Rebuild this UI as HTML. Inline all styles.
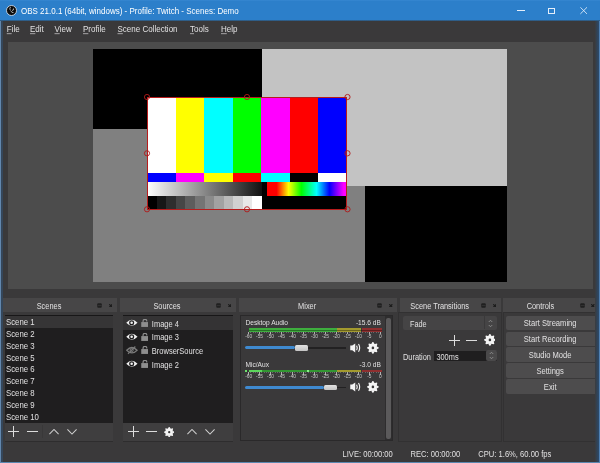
<!DOCTYPE html>
<html><head><meta charset="utf-8"><style>
html,body{margin:0;padding:0;background:#3a393a;width:600px;height:463px;overflow:hidden}
#r{position:relative;width:600px;height:463px;overflow:hidden;background:#3a393a;font-family:"Liberation Sans", sans-serif;will-change:transform}
.b{position:absolute}
.t{position:absolute;white-space:nowrap;line-height:1;font-family:"Liberation Sans", sans-serif}
u{text-decoration-thickness:0.6px;text-underline-offset:1.2px;text-decoration-color:rgba(225,224,225,0.55)}
</style></head><body><div id="r">
<div class="b" style="left:0.00px;top:0.00px;width:600.00px;height:21.30px;background:linear-gradient(to bottom,#3a8ad4 0px,#2c7fca 1px,#2c7fca 19.6px,#2f5a80 20.6px,#34404c 21.3px)"></div>
<svg class="b" style="left:6px;top:5px" width="11" height="11" viewBox="0 0 22 22">
<circle cx="11" cy="11" r="10" fill="#0b0b0b" stroke="#dfe9f3" stroke-width="1.6"/>
<path d="M9 4 Q6 8 9 11 M15 15 Q11 16 10 12 M15 7 Q16 11 12 11" stroke="#cfcfcf" stroke-width="1.6" fill="none"/>
</svg>
<div class="t" style="left:21.00px;top:7.83px;font-size:8px;color:#ffffff;transform:scaleY(1.15);transform-origin:0 6.77px;">OBS 21.0.1 (64bit, windows) - Profile: Twitch - Scenes: Demo</div>
<div class="b" style="left:516.80px;top:10.00px;width:8.20px;height:0.90px;background:#e4eefa"></div>
<div class="b" style="left:548.40px;top:7.60px;width:6.80px;height:6.70px;border:0.9px solid #e4eefa;box-sizing:border-box"></div>
<svg class="b" style="left:579.6px;top:7.4px" width="7.4" height="7.2" viewBox="0 0 8 8"><path d="M0.3 0.3 L7.7 7.7 M7.7 0.3 L0.3 7.7" stroke="#e4eefa" stroke-width="0.95"/></svg>
<div class="b" style="left:0.00px;top:21.00px;width:600.00px;height:17.00px;background:#3a393a"></div>
<div class="t" style="left:6.75px;top:25.93px;font-size:8px;color:#e1e0e1;transform:scaleY(1.15);transform-origin:0 6.77px;"><u>F</u>ile</div>
<div class="t" style="left:30.00px;top:25.93px;font-size:8px;color:#e1e0e1;transform:scaleY(1.15);transform-origin:0 6.77px;"><u>E</u>dit</div>
<div class="t" style="left:54.50px;top:25.93px;font-size:8px;color:#e1e0e1;transform:scaleY(1.15);transform-origin:0 6.77px;"><u>V</u>iew</div>
<div class="t" style="left:83.00px;top:25.93px;font-size:8px;color:#e1e0e1;transform:scaleY(1.15);transform-origin:0 6.77px;"><u>P</u>rofile</div>
<div class="t" style="left:117.50px;top:25.93px;font-size:8px;color:#e1e0e1;transform:scaleY(1.15);transform-origin:0 6.77px;"><u>S</u>cene Collection</div>
<div class="t" style="left:190.00px;top:25.93px;font-size:8px;color:#e1e0e1;transform:scaleY(1.15);transform-origin:0 6.77px;"><u>T</u>ools</div>
<div class="t" style="left:221.00px;top:25.93px;font-size:8px;color:#e1e0e1;transform:scaleY(1.15);transform-origin:0 6.77px;"><u>H</u>elp</div>
<div class="b" style="left:7.60px;top:41.80px;width:585.00px;height:247.50px;background:#4c4c4c"></div>
<div class="b" style="left:93.00px;top:49.00px;width:414.00px;height:233.00px;background:#808080"></div>
<div class="b" style="left:93.00px;top:49.00px;width:169.00px;height:80.00px;background:#000"></div>
<div class="b" style="left:262.00px;top:49.00px;width:245.00px;height:137.00px;background:#c3c3c3"></div>
<div class="b" style="left:365.00px;top:186.00px;width:142.00px;height:96.00px;background:#000"></div>
<div class="b" style="left:147.00px;top:97.00px;width:28.57px;height:75.50px;background:#ffffff"></div>
<div class="b" style="left:175.57px;top:97.00px;width:28.57px;height:75.50px;background:#ffff00"></div>
<div class="b" style="left:204.14px;top:97.00px;width:28.57px;height:75.50px;background:#00ffff"></div>
<div class="b" style="left:232.71px;top:97.00px;width:28.57px;height:75.50px;background:#00ff00"></div>
<div class="b" style="left:261.29px;top:97.00px;width:28.57px;height:75.50px;background:#ff00ff"></div>
<div class="b" style="left:289.86px;top:97.00px;width:28.57px;height:75.50px;background:#ff0000"></div>
<div class="b" style="left:318.43px;top:97.00px;width:28.57px;height:75.50px;background:#0000ff"></div>
<div class="b" style="left:147.00px;top:172.50px;width:28.57px;height:9.00px;background:#0000ff"></div>
<div class="b" style="left:175.57px;top:172.50px;width:28.57px;height:9.00px;background:#ff00ff"></div>
<div class="b" style="left:204.14px;top:172.50px;width:28.57px;height:9.00px;background:#ffff00"></div>
<div class="b" style="left:232.71px;top:172.50px;width:28.57px;height:9.00px;background:#ff0000"></div>
<div class="b" style="left:261.29px;top:172.50px;width:28.57px;height:9.00px;background:#00ffff"></div>
<div class="b" style="left:289.86px;top:172.50px;width:28.57px;height:9.00px;background:#000000"></div>
<div class="b" style="left:318.43px;top:172.50px;width:28.57px;height:9.00px;background:#ffffff"></div>
<div class="b" style="left:147.00px;top:181.50px;width:119.50px;height:14.00px;background:#000"></div>
<div class="b" style="left:147.00px;top:181.50px;width:115.00px;height:14.00px;background:linear-gradient(to right,#fff,#111)"></div>
<div class="b" style="left:266.50px;top:181.50px;width:80.50px;height:14.00px;background:linear-gradient(to right,#f00 0%,#f00 12%,#ff0 27%,#0f0 43%,#0ff 62%,#00f 78%,#f0f 96%)"></div>
<div class="b" style="left:147.00px;top:195.50px;width:200.00px;height:13.50px;background:#000"></div>
<div class="b" style="left:147.00px;top:195.50px;width:115.00px;height:13.50px;background:linear-gradient(to right,rgb(0,0,0) 0.000%, rgb(0,0,0) 8.333%,rgb(23,23,23) 8.333%, rgb(23,23,23) 16.667%,rgb(46,46,46) 16.667%, rgb(46,46,46) 25.000%,rgb(70,70,70) 25.000%, rgb(70,70,70) 33.333%,rgb(93,93,93) 33.333%, rgb(93,93,93) 41.667%,rgb(116,116,116) 41.667%, rgb(116,116,116) 50.000%,rgb(139,139,139) 50.000%, rgb(139,139,139) 58.333%,rgb(162,162,162) 58.333%, rgb(162,162,162) 66.667%,rgb(185,185,185) 66.667%, rgb(185,185,185) 75.000%,rgb(209,209,209) 75.000%, rgb(209,209,209) 83.333%,rgb(232,232,232) 83.333%, rgb(232,232,232) 91.667%,rgb(255,255,255) 91.667%, rgb(255,255,255) 100.000%)"></div>
<div class="b" style="left:146.50px;top:96.60px;width:200.90px;height:113.00px;border:1px solid #b81c1c;box-sizing:border-box"></div>
<svg class="b" style="left:140px;top:90px" width="215" height="125" viewBox="0 0 215 125"><circle cx="7" cy="7" r="2.6" fill="none" stroke="#b01818" stroke-width="0.9"/><circle cx="7" cy="63.30000000000001" r="2.6" fill="none" stroke="#b01818" stroke-width="0.9"/><circle cx="7" cy="119.30000000000001" r="2.6" fill="none" stroke="#b01818" stroke-width="0.9"/><circle cx="107" cy="7" r="2.6" fill="none" stroke="#b01818" stroke-width="0.9"/><circle cx="107" cy="119.30000000000001" r="2.6" fill="none" stroke="#b01818" stroke-width="0.9"/><circle cx="207.5" cy="7" r="2.6" fill="none" stroke="#b01818" stroke-width="0.9"/><circle cx="207.5" cy="63.30000000000001" r="2.6" fill="none" stroke="#b01818" stroke-width="0.9"/><circle cx="207.5" cy="119.30000000000001" r="2.6" fill="none" stroke="#b01818" stroke-width="0.9"/></svg>
<div class="b" style="left:3.00px;top:298.00px;width:114.00px;height:13.70px;background:#474647"></div>
<div class="t" style="left:-51.00px;width:200px;text-align:center;top:302.64px;font-size:7.4px;color:#e1e0e1;transform:scaleY(1.15);transform-origin:0 6.26px;">Scenes</div>
<svg class="b" style="left:97.00px;top:302.6px" width="5" height="5" viewBox="0 0 10 10">
<rect x="0.5" y="0.5" width="9" height="9" rx="2" fill="#202020"/><rect x="2" y="4.2" width="7" height="1.3" fill="#3a3a3a"/></svg>
<svg class="b" style="left:108.70px;top:303.6px" width="3.6" height="3.6" viewBox="0 0 4 4"><path d="M0.3 0.3L3.7 3.7M3.7 0.3L0.3 3.7" stroke="#1a1a1a" stroke-width="1.3"/></svg>
<div class="b" style="left:120.00px;top:298.00px;width:116.00px;height:13.70px;background:#474647"></div>
<div class="t" style="left:67.00px;width:200px;text-align:center;top:302.64px;font-size:7.4px;color:#e1e0e1;transform:scaleY(1.15);transform-origin:0 6.26px;">Sources</div>
<svg class="b" style="left:216.00px;top:302.6px" width="5" height="5" viewBox="0 0 10 10">
<rect x="0.5" y="0.5" width="9" height="9" rx="2" fill="#202020"/><rect x="2" y="4.2" width="7" height="1.3" fill="#3a3a3a"/></svg>
<svg class="b" style="left:227.70px;top:303.6px" width="3.6" height="3.6" viewBox="0 0 4 4"><path d="M0.3 0.3L3.7 3.7M3.7 0.3L0.3 3.7" stroke="#1a1a1a" stroke-width="1.3"/></svg>
<div class="b" style="left:239.00px;top:298.00px;width:158.30px;height:13.70px;background:#474647"></div>
<div class="t" style="left:207.15px;width:200px;text-align:center;top:302.64px;font-size:7.4px;color:#e1e0e1;transform:scaleY(1.15);transform-origin:0 6.26px;">Mixer</div>
<svg class="b" style="left:377.30px;top:302.6px" width="5" height="5" viewBox="0 0 10 10">
<rect x="0.5" y="0.5" width="9" height="9" rx="2" fill="#202020"/><rect x="2" y="4.2" width="7" height="1.3" fill="#3a3a3a"/></svg>
<svg class="b" style="left:389.00px;top:303.6px" width="3.6" height="3.6" viewBox="0 0 4 4"><path d="M0.3 0.3L3.7 3.7M3.7 0.3L0.3 3.7" stroke="#1a1a1a" stroke-width="1.3"/></svg>
<div class="b" style="left:399.70px;top:298.00px;width:101.30px;height:13.70px;background:#474647"></div>
<div class="t" style="left:339.70px;width:200px;text-align:center;top:302.64px;font-size:7.4px;color:#e1e0e1;transform:scaleY(1.15);transform-origin:0 6.26px;">Scene Transitions</div>
<svg class="b" style="left:481.00px;top:302.6px" width="5" height="5" viewBox="0 0 10 10">
<rect x="0.5" y="0.5" width="9" height="9" rx="2" fill="#202020"/><rect x="2" y="4.2" width="7" height="1.3" fill="#3a3a3a"/></svg>
<svg class="b" style="left:492.70px;top:303.6px" width="3.6" height="3.6" viewBox="0 0 4 4"><path d="M0.3 0.3L3.7 3.7M3.7 0.3L0.3 3.7" stroke="#1a1a1a" stroke-width="1.3"/></svg>
<div class="b" style="left:503.30px;top:298.00px;width:91.70px;height:13.70px;background:#474647"></div>
<div class="t" style="left:440.40px;width:200px;text-align:center;top:302.64px;font-size:7.4px;color:#e1e0e1;transform:scaleY(1.15);transform-origin:0 6.26px;">Controls</div>
<svg class="b" style="left:579.50px;top:302.6px" width="5" height="5" viewBox="0 0 10 10">
<rect x="0.5" y="0.5" width="9" height="9" rx="2" fill="#202020"/><rect x="2" y="4.2" width="7" height="1.3" fill="#3a3a3a"/></svg>
<svg class="b" style="left:591.20px;top:303.6px" width="3.6" height="3.6" viewBox="0 0 4 4"><path d="M0.3 0.3L3.7 3.7M3.7 0.3L0.3 3.7" stroke="#1a1a1a" stroke-width="1.3"/></svg>
<div class="b" style="left:595.00px;top:298.00px;width:3.00px;height:14.00px;background:#3a393a"></div>
<div class="b" style="left:4.50px;top:315.00px;width:108.80px;height:107.50px;background:#1f1e1f"></div>
<div class="b" style="left:4.50px;top:315.00px;width:108.80px;height:0.80px;background:#181718"></div>
<div class="b" style="left:4.50px;top:315.80px;width:108.80px;height:12.20px;background:#363536"></div>
<div class="t" style="left:6.00px;top:319.10px;font-size:7.8px;color:#e1e0e1;transform:scaleY(1.15);transform-origin:0 6.60px;">Scene 1</div>
<div class="t" style="left:6.00px;top:330.90px;font-size:7.8px;color:#e1e0e1;transform:scaleY(1.15);transform-origin:0 6.60px;">Scene 2</div>
<div class="t" style="left:6.00px;top:342.70px;font-size:7.8px;color:#e1e0e1;transform:scaleY(1.15);transform-origin:0 6.60px;">Scene 3</div>
<div class="t" style="left:6.00px;top:354.50px;font-size:7.8px;color:#e1e0e1;transform:scaleY(1.15);transform-origin:0 6.60px;">Scene 5</div>
<div class="t" style="left:6.00px;top:366.30px;font-size:7.8px;color:#e1e0e1;transform:scaleY(1.15);transform-origin:0 6.60px;">Scene 6</div>
<div class="t" style="left:6.00px;top:378.10px;font-size:7.8px;color:#e1e0e1;transform:scaleY(1.15);transform-origin:0 6.60px;">Scene 7</div>
<div class="t" style="left:6.00px;top:389.90px;font-size:7.8px;color:#e1e0e1;transform:scaleY(1.15);transform-origin:0 6.60px;">Scene 8</div>
<div class="t" style="left:6.00px;top:401.70px;font-size:7.8px;color:#e1e0e1;transform:scaleY(1.15);transform-origin:0 6.60px;">Scene 9</div>
<div class="t" style="left:6.00px;top:413.50px;font-size:7.8px;color:#e1e0e1;transform:scaleY(1.15);transform-origin:0 6.60px;">Scene 10</div>
<div class="b" style="left:4.50px;top:422.50px;width:108.80px;height:18.50px;background:#3f3e3f"></div>
<div class="b" style="left:4.50px;top:441.00px;width:108.80px;height:0.90px;background:#2e2d2e"></div>
<div class="b" style="left:8.10px;top:431.30px;width:11.00px;height:1px;background:#dcdcdc"></div>
<div class="b" style="left:13.10px;top:426.30px;width:1px;height:11.00px;background:#dcdcdc"></div>
<div class="b" style="left:26.50px;top:431.30px;width:11.00px;height:1px;background:#dcdcdc"></div>
<svg class="b" style="left:49.00px;top:429.10px" width="10" height="5.5" viewBox="0 -0.5 10 6"><path d="M0 5 L5 0 L10 5" stroke="#d0d0d0" stroke-width="1.1" fill="none"/></svg>
<svg class="b" style="left:67.00px;top:429.10px" width="10" height="5.5" viewBox="0 -0.5 10 6"><path d="M0 0 L5 5 L10 0" stroke="#d0d0d0" stroke-width="1.1" fill="none"/></svg>
<div class="b" style="left:42.00px;top:425.00px;width:0.70px;height:13.00px;background:#393839"></div>
<div class="b" style="left:122.50px;top:315.00px;width:110.00px;height:107.50px;background:#1f1e1f"></div>
<div class="b" style="left:122.50px;top:315.00px;width:110.00px;height:1.00px;background:#181718"></div>
<div class="b" style="left:122.50px;top:316.00px;width:110.00px;height:13.50px;background:#343334"></div>
<div class="t" style="left:151.80px;top:320.75px;font-size:7.5px;color:#e1e0e1;transform:scaleY(1.15);transform-origin:0 6.35px;">Image 4</div>
<svg class="b" style="left:126.4px;top:319.20px" width="11.8" height="7.6" viewBox="0 0 24 15.5">
<path d="M0.5 7.75 Q12 -4.5 23.5 7.75 Q12 20 0.5 7.75Z" fill="#f2f2f2"/><circle cx="11.5" cy="7.75" r="5.2" fill="#1f1e1f"/><circle cx="11.5" cy="7.75" r="2.6" fill="#f2f2f2"/></svg>
<svg class="b" style="left:140.6px;top:318.80px" width="7.8" height="8" viewBox="0 0 16 16.4">
<path d="M4.2 6.5 V4.6 A3.9 3.9 0 0 1 12 4.6 V5" stroke="#8e8e8e" stroke-width="2.4" fill="none"/><rect x="0.5" y="6.3" width="15" height="10" fill="#8e8e8e"/></svg>
<div class="t" style="left:151.80px;top:334.45px;font-size:7.5px;color:#e1e0e1;transform:scaleY(1.15);transform-origin:0 6.35px;">Image 3</div>
<svg class="b" style="left:126.4px;top:332.90px" width="11.8" height="7.6" viewBox="0 0 24 15.5">
<path d="M0.5 7.75 Q12 -4.5 23.5 7.75 Q12 20 0.5 7.75Z" fill="#f2f2f2"/><circle cx="11.5" cy="7.75" r="5.2" fill="#1f1e1f"/><circle cx="11.5" cy="7.75" r="2.6" fill="#f2f2f2"/></svg>
<svg class="b" style="left:140.6px;top:332.50px" width="7.8" height="8" viewBox="0 0 16 16.4">
<path d="M4.2 6.5 V4.6 A3.9 3.9 0 0 1 12 4.6 V5" stroke="#8e8e8e" stroke-width="2.4" fill="none"/><rect x="0.5" y="6.3" width="15" height="10" fill="#8e8e8e"/></svg>
<div class="t" style="left:151.80px;top:348.15px;font-size:7.5px;color:#e1e0e1;transform:scaleY(1.15);transform-origin:0 6.35px;">BrowserSource</div>
<svg class="b" style="left:126.4px;top:346.20px" width="11.8" height="8.4" viewBox="0 0 24 17">
<path d="M1.5 8.5 Q12 -2.5 22.5 8.5 Q12 19.5 1.5 8.5Z" fill="none" stroke="#7a7a7a" stroke-width="2.6"/><circle cx="11.5" cy="8.5" r="3.2" fill="none" stroke="#7a7a7a" stroke-width="2"/>
<path d="M4 16 L19 1" stroke="#7a7a7a" stroke-width="2.4"/></svg>
<svg class="b" style="left:140.6px;top:346.20px" width="7.8" height="8" viewBox="0 0 16 16.4">
<path d="M4.2 6.5 V4.6 A3.9 3.9 0 0 1 12 4.6 V5" stroke="#8e8e8e" stroke-width="2.4" fill="none"/><rect x="0.5" y="6.3" width="15" height="10" fill="#8e8e8e"/></svg>
<div class="t" style="left:151.80px;top:361.85px;font-size:7.5px;color:#e1e0e1;transform:scaleY(1.15);transform-origin:0 6.35px;">Image 2</div>
<svg class="b" style="left:126.4px;top:360.30px" width="11.8" height="7.6" viewBox="0 0 24 15.5">
<path d="M0.5 7.75 Q12 -4.5 23.5 7.75 Q12 20 0.5 7.75Z" fill="#f2f2f2"/><circle cx="11.5" cy="7.75" r="5.2" fill="#1f1e1f"/><circle cx="11.5" cy="7.75" r="2.6" fill="#f2f2f2"/></svg>
<svg class="b" style="left:140.6px;top:359.90px" width="7.8" height="8" viewBox="0 0 16 16.4">
<path d="M4.2 6.5 V4.6 A3.9 3.9 0 0 1 12 4.6 V5" stroke="#8e8e8e" stroke-width="2.4" fill="none"/><rect x="0.5" y="6.3" width="15" height="10" fill="#8e8e8e"/></svg>
<div class="b" style="left:122.50px;top:422.50px;width:110.00px;height:18.50px;background:#3f3e3f"></div>
<div class="b" style="left:122.50px;top:441.00px;width:110.00px;height:0.90px;background:#2e2d2e"></div>
<div class="b" style="left:127.50px;top:431.30px;width:11.00px;height:1px;background:#dcdcdc"></div>
<div class="b" style="left:132.50px;top:426.30px;width:1px;height:11.00px;background:#dcdcdc"></div>
<div class="b" style="left:145.50px;top:431.30px;width:11.00px;height:1px;background:#dcdcdc"></div>
<svg class="b" style="left:163.80px;top:426.60px" width="10.40" height="10.40" viewBox="-12 -12 24 24">
<g fill="#f4f4f4"><path d="M-3.6 -7.2 L-0.9 -11.9 L0.9 -11.9 L3.6 -7.2 Z" transform="rotate(0)"/><path d="M-3.6 -7.2 L-0.9 -11.9 L0.9 -11.9 L3.6 -7.2 Z" transform="rotate(45)"/><path d="M-3.6 -7.2 L-0.9 -11.9 L0.9 -11.9 L3.6 -7.2 Z" transform="rotate(90)"/><path d="M-3.6 -7.2 L-0.9 -11.9 L0.9 -11.9 L3.6 -7.2 Z" transform="rotate(135)"/><path d="M-3.6 -7.2 L-0.9 -11.9 L0.9 -11.9 L3.6 -7.2 Z" transform="rotate(180)"/><path d="M-3.6 -7.2 L-0.9 -11.9 L0.9 -11.9 L3.6 -7.2 Z" transform="rotate(225)"/><path d="M-3.6 -7.2 L-0.9 -11.9 L0.9 -11.9 L3.6 -7.2 Z" transform="rotate(270)"/><path d="M-3.6 -7.2 L-0.9 -11.9 L0.9 -11.9 L3.6 -7.2 Z" transform="rotate(315)"/><circle r="8.3"/></g><circle r="2.6" fill="#3a393a"/></svg>
<svg class="b" style="left:187.00px;top:429.10px" width="10" height="5.5" viewBox="0 -0.5 10 6"><path d="M0 5 L5 0 L10 5" stroke="#d0d0d0" stroke-width="1.1" fill="none"/></svg>
<svg class="b" style="left:204.50px;top:429.10px" width="10" height="5.5" viewBox="0 -0.5 10 6"><path d="M0 0 L5 5 L10 0" stroke="#d0d0d0" stroke-width="1.1" fill="none"/></svg>
<div class="b" style="left:240.00px;top:314.80px;width:153.00px;height:126.20px;background:#3a393a;border:1px solid #2a292a;box-sizing:border-box"></div>
<div class="b" style="left:385.00px;top:316.00px;width:7.00px;height:124.00px;background:#2e2d2e"></div>
<div class="b" style="left:386.20px;top:318.00px;width:5.00px;height:121.00px;background:#5b5a5b;border-radius:2px"></div>
<div class="t" style="left:245.50px;top:319.91px;font-size:6.6px;color:#e1e0e1;">Desktop Audio</div>
<div class="t" style="right:219.20px;top:319.91px;font-size:6.6px;color:#e1e0e1;">-15.6 dB</div>
<div class="b" style="left:248.80px;top:328.00px;width:88.00px;height:3.80px;background:#329632"></div>
<div class="b" style="left:336.80px;top:328.00px;width:24.70px;height:3.80px;background:#a39a2e"></div>
<div class="b" style="left:361.50px;top:328.00px;width:20.90px;height:3.80px;background:#8f2f2f"></div>
<div class="b" style="left:248.80px;top:328.00px;width:88.00px;height:3.80px;background:#3eae3e"></div>
<div class="b" style="left:248.80px;top:329.65px;width:133.60px;height:0.50px;background:rgba(0,0,0,0.35)"></div>
<div class="b" style="left:250.49px;top:331.80px;width:0.70px;height:1.40px;background:#6a6a6a"></div>
<div class="b" style="left:252.69px;top:331.80px;width:0.70px;height:1.40px;background:#6a6a6a"></div>
<div class="b" style="left:254.88px;top:331.80px;width:0.70px;height:1.40px;background:#6a6a6a"></div>
<div class="b" style="left:257.08px;top:331.80px;width:0.70px;height:1.40px;background:#6a6a6a"></div>
<div class="b" style="left:261.47px;top:331.80px;width:0.70px;height:1.40px;background:#6a6a6a"></div>
<div class="b" style="left:263.66px;top:331.80px;width:0.70px;height:1.40px;background:#6a6a6a"></div>
<div class="b" style="left:265.86px;top:331.80px;width:0.70px;height:1.40px;background:#6a6a6a"></div>
<div class="b" style="left:268.06px;top:331.80px;width:0.70px;height:1.40px;background:#6a6a6a"></div>
<div class="b" style="left:272.44px;top:331.80px;width:0.70px;height:1.40px;background:#6a6a6a"></div>
<div class="b" style="left:274.64px;top:331.80px;width:0.70px;height:1.40px;background:#6a6a6a"></div>
<div class="b" style="left:276.83px;top:331.80px;width:0.70px;height:1.40px;background:#6a6a6a"></div>
<div class="b" style="left:279.03px;top:331.80px;width:0.70px;height:1.40px;background:#6a6a6a"></div>
<div class="b" style="left:283.42px;top:331.80px;width:0.70px;height:1.40px;background:#6a6a6a"></div>
<div class="b" style="left:285.62px;top:331.80px;width:0.70px;height:1.40px;background:#6a6a6a"></div>
<div class="b" style="left:287.81px;top:331.80px;width:0.70px;height:1.40px;background:#6a6a6a"></div>
<div class="b" style="left:290.00px;top:331.80px;width:0.70px;height:1.40px;background:#6a6a6a"></div>
<div class="b" style="left:294.39px;top:331.80px;width:0.70px;height:1.40px;background:#6a6a6a"></div>
<div class="b" style="left:296.59px;top:331.80px;width:0.70px;height:1.40px;background:#6a6a6a"></div>
<div class="b" style="left:298.78px;top:331.80px;width:0.70px;height:1.40px;background:#6a6a6a"></div>
<div class="b" style="left:300.98px;top:331.80px;width:0.70px;height:1.40px;background:#6a6a6a"></div>
<div class="b" style="left:305.37px;top:331.80px;width:0.70px;height:1.40px;background:#6a6a6a"></div>
<div class="b" style="left:307.56px;top:331.80px;width:0.70px;height:1.40px;background:#6a6a6a"></div>
<div class="b" style="left:309.76px;top:331.80px;width:0.70px;height:1.40px;background:#6a6a6a"></div>
<div class="b" style="left:311.95px;top:331.80px;width:0.70px;height:1.40px;background:#6a6a6a"></div>
<div class="b" style="left:316.34px;top:331.80px;width:0.70px;height:1.40px;background:#6a6a6a"></div>
<div class="b" style="left:318.54px;top:331.80px;width:0.70px;height:1.40px;background:#6a6a6a"></div>
<div class="b" style="left:320.73px;top:331.80px;width:0.70px;height:1.40px;background:#6a6a6a"></div>
<div class="b" style="left:322.93px;top:331.80px;width:0.70px;height:1.40px;background:#6a6a6a"></div>
<div class="b" style="left:327.32px;top:331.80px;width:0.70px;height:1.40px;background:#6a6a6a"></div>
<div class="b" style="left:329.51px;top:331.80px;width:0.70px;height:1.40px;background:#6a6a6a"></div>
<div class="b" style="left:331.71px;top:331.80px;width:0.70px;height:1.40px;background:#6a6a6a"></div>
<div class="b" style="left:333.91px;top:331.80px;width:0.70px;height:1.40px;background:#6a6a6a"></div>
<div class="b" style="left:338.30px;top:331.80px;width:0.70px;height:1.40px;background:#6a6a6a"></div>
<div class="b" style="left:340.49px;top:331.80px;width:0.70px;height:1.40px;background:#6a6a6a"></div>
<div class="b" style="left:342.69px;top:331.80px;width:0.70px;height:1.40px;background:#6a6a6a"></div>
<div class="b" style="left:344.88px;top:331.80px;width:0.70px;height:1.40px;background:#6a6a6a"></div>
<div class="b" style="left:349.27px;top:331.80px;width:0.70px;height:1.40px;background:#6a6a6a"></div>
<div class="b" style="left:351.46px;top:331.80px;width:0.70px;height:1.40px;background:#6a6a6a"></div>
<div class="b" style="left:353.66px;top:331.80px;width:0.70px;height:1.40px;background:#6a6a6a"></div>
<div class="b" style="left:355.86px;top:331.80px;width:0.70px;height:1.40px;background:#6a6a6a"></div>
<div class="b" style="left:360.25px;top:331.80px;width:0.70px;height:1.40px;background:#6a6a6a"></div>
<div class="b" style="left:362.44px;top:331.80px;width:0.70px;height:1.40px;background:#6a6a6a"></div>
<div class="b" style="left:364.63px;top:331.80px;width:0.70px;height:1.40px;background:#6a6a6a"></div>
<div class="b" style="left:366.83px;top:331.80px;width:0.70px;height:1.40px;background:#6a6a6a"></div>
<div class="b" style="left:371.22px;top:331.80px;width:0.70px;height:1.40px;background:#6a6a6a"></div>
<div class="b" style="left:373.42px;top:331.80px;width:0.70px;height:1.40px;background:#6a6a6a"></div>
<div class="b" style="left:375.61px;top:331.80px;width:0.70px;height:1.40px;background:#6a6a6a"></div>
<div class="b" style="left:377.81px;top:331.80px;width:0.70px;height:1.40px;background:#6a6a6a"></div>
<div class="b" style="left:248.20px;top:331.80px;width:0.80px;height:2.60px;background:#b0b0b0"></div>
<div class="t" style="left:148.60px;width:200px;text-align:center;top:335.24px;font-size:4.8px;color:#c8c8c8;">-60</div>
<div class="b" style="left:259.18px;top:331.80px;width:0.80px;height:2.60px;background:#b0b0b0"></div>
<div class="t" style="left:159.57px;width:200px;text-align:center;top:335.24px;font-size:4.8px;color:#c8c8c8;">-55</div>
<div class="b" style="left:270.15px;top:331.80px;width:0.80px;height:2.60px;background:#b0b0b0"></div>
<div class="t" style="left:170.55px;width:200px;text-align:center;top:335.24px;font-size:4.8px;color:#c8c8c8;">-50</div>
<div class="b" style="left:281.12px;top:331.80px;width:0.80px;height:2.60px;background:#b0b0b0"></div>
<div class="t" style="left:181.52px;width:200px;text-align:center;top:335.24px;font-size:4.8px;color:#c8c8c8;">-45</div>
<div class="b" style="left:292.10px;top:331.80px;width:0.80px;height:2.60px;background:#b0b0b0"></div>
<div class="t" style="left:192.50px;width:200px;text-align:center;top:335.24px;font-size:4.8px;color:#c8c8c8;">-40</div>
<div class="b" style="left:303.08px;top:331.80px;width:0.80px;height:2.60px;background:#b0b0b0"></div>
<div class="t" style="left:203.48px;width:200px;text-align:center;top:335.24px;font-size:4.8px;color:#c8c8c8;">-35</div>
<div class="b" style="left:314.05px;top:331.80px;width:0.80px;height:2.60px;background:#b0b0b0"></div>
<div class="t" style="left:214.45px;width:200px;text-align:center;top:335.24px;font-size:4.8px;color:#c8c8c8;">-30</div>
<div class="b" style="left:325.03px;top:331.80px;width:0.80px;height:2.60px;background:#b0b0b0"></div>
<div class="t" style="left:225.43px;width:200px;text-align:center;top:335.24px;font-size:4.8px;color:#c8c8c8;">-25</div>
<div class="b" style="left:336.00px;top:331.80px;width:0.80px;height:2.60px;background:#b0b0b0"></div>
<div class="t" style="left:236.40px;width:200px;text-align:center;top:335.24px;font-size:4.8px;color:#c8c8c8;">-20</div>
<div class="b" style="left:346.98px;top:331.80px;width:0.80px;height:2.60px;background:#b0b0b0"></div>
<div class="t" style="left:247.38px;width:200px;text-align:center;top:335.24px;font-size:4.8px;color:#c8c8c8;">-15</div>
<div class="b" style="left:357.95px;top:331.80px;width:0.80px;height:2.60px;background:#b0b0b0"></div>
<div class="t" style="left:258.35px;width:200px;text-align:center;top:335.24px;font-size:4.8px;color:#c8c8c8;">-10</div>
<div class="b" style="left:368.93px;top:331.80px;width:0.80px;height:2.60px;background:#b0b0b0"></div>
<div class="t" style="left:269.33px;width:200px;text-align:center;top:335.24px;font-size:4.8px;color:#c8c8c8;">-5</div>
<div class="b" style="left:379.90px;top:331.80px;width:0.80px;height:2.60px;background:#b0b0b0"></div>
<div class="t" style="left:280.30px;width:200px;text-align:center;top:335.24px;font-size:4.8px;color:#c8c8c8;">0</div>
<div class="b" style="left:245.00px;top:347.00px;width:100.50px;height:1.60px;background:#222122"></div>
<div class="b" style="left:245.00px;top:346.30px;width:50.00px;height:3.00px;background:#3f8ad0;border-radius:1.5px"></div>
<div class="b" style="left:294.50px;top:345.00px;width:13.00px;height:5.60px;background:linear-gradient(#e2e2e2,#c4c4c4);border-radius:1.5px"></div>
<svg class="b" style="left:350px;top:342.90px" width="11.5" height="9.8" viewBox="0 0 23 19.6">
<path d="M0.5 5.2 H4.5 L10.5 0.8 V18.8 L4.5 14.4 H0.5 Z" fill="#f4f4f4"/>
<path d="M13.2 5.2 Q15.8 9.8 13.2 14.4" stroke="#f4f4f4" stroke-width="2.3" fill="none"/>
<path d="M17 2 Q21.6 9.8 17 17.6" stroke="#f4f4f4" stroke-width="2.3" fill="none"/></svg>
<svg class="b" style="left:367.40px;top:341.90px" width="11.80" height="11.80" viewBox="-12 -12 24 24">
<g fill="#f4f4f4"><path d="M-3.6 -7.2 L-0.9 -11.9 L0.9 -11.9 L3.6 -7.2 Z" transform="rotate(0)"/><path d="M-3.6 -7.2 L-0.9 -11.9 L0.9 -11.9 L3.6 -7.2 Z" transform="rotate(45)"/><path d="M-3.6 -7.2 L-0.9 -11.9 L0.9 -11.9 L3.6 -7.2 Z" transform="rotate(90)"/><path d="M-3.6 -7.2 L-0.9 -11.9 L0.9 -11.9 L3.6 -7.2 Z" transform="rotate(135)"/><path d="M-3.6 -7.2 L-0.9 -11.9 L0.9 -11.9 L3.6 -7.2 Z" transform="rotate(180)"/><path d="M-3.6 -7.2 L-0.9 -11.9 L0.9 -11.9 L3.6 -7.2 Z" transform="rotate(225)"/><path d="M-3.6 -7.2 L-0.9 -11.9 L0.9 -11.9 L3.6 -7.2 Z" transform="rotate(270)"/><path d="M-3.6 -7.2 L-0.9 -11.9 L0.9 -11.9 L3.6 -7.2 Z" transform="rotate(315)"/><circle r="8.3"/></g><circle r="2.6" fill="#3a393a"/></svg>
<div class="t" style="left:245.50px;top:361.91px;font-size:6.6px;color:#e1e0e1;">Mic/Aux</div>
<div class="t" style="right:219.20px;top:361.91px;font-size:6.6px;color:#e1e0e1;">-3.0 dB</div>
<div class="b" style="left:248.80px;top:369.80px;width:88.00px;height:2.20px;background:#329632"></div>
<div class="b" style="left:336.80px;top:369.80px;width:24.70px;height:2.20px;background:#a39a2e"></div>
<div class="b" style="left:361.50px;top:369.80px;width:20.90px;height:2.20px;background:#8f2f2f"></div>
<div class="b" style="left:248.80px;top:369.80px;width:13.20px;height:2.20px;background:#5cd65c"></div>
<div class="b" style="left:306.70px;top:369.80px;width:2.00px;height:2.20px;background:#8cf08c"></div>
<div class="b" style="left:250.49px;top:372.00px;width:0.70px;height:1.40px;background:#6a6a6a"></div>
<div class="b" style="left:252.69px;top:372.00px;width:0.70px;height:1.40px;background:#6a6a6a"></div>
<div class="b" style="left:254.88px;top:372.00px;width:0.70px;height:1.40px;background:#6a6a6a"></div>
<div class="b" style="left:257.08px;top:372.00px;width:0.70px;height:1.40px;background:#6a6a6a"></div>
<div class="b" style="left:261.47px;top:372.00px;width:0.70px;height:1.40px;background:#6a6a6a"></div>
<div class="b" style="left:263.66px;top:372.00px;width:0.70px;height:1.40px;background:#6a6a6a"></div>
<div class="b" style="left:265.86px;top:372.00px;width:0.70px;height:1.40px;background:#6a6a6a"></div>
<div class="b" style="left:268.06px;top:372.00px;width:0.70px;height:1.40px;background:#6a6a6a"></div>
<div class="b" style="left:272.44px;top:372.00px;width:0.70px;height:1.40px;background:#6a6a6a"></div>
<div class="b" style="left:274.64px;top:372.00px;width:0.70px;height:1.40px;background:#6a6a6a"></div>
<div class="b" style="left:276.83px;top:372.00px;width:0.70px;height:1.40px;background:#6a6a6a"></div>
<div class="b" style="left:279.03px;top:372.00px;width:0.70px;height:1.40px;background:#6a6a6a"></div>
<div class="b" style="left:283.42px;top:372.00px;width:0.70px;height:1.40px;background:#6a6a6a"></div>
<div class="b" style="left:285.62px;top:372.00px;width:0.70px;height:1.40px;background:#6a6a6a"></div>
<div class="b" style="left:287.81px;top:372.00px;width:0.70px;height:1.40px;background:#6a6a6a"></div>
<div class="b" style="left:290.00px;top:372.00px;width:0.70px;height:1.40px;background:#6a6a6a"></div>
<div class="b" style="left:294.39px;top:372.00px;width:0.70px;height:1.40px;background:#6a6a6a"></div>
<div class="b" style="left:296.59px;top:372.00px;width:0.70px;height:1.40px;background:#6a6a6a"></div>
<div class="b" style="left:298.78px;top:372.00px;width:0.70px;height:1.40px;background:#6a6a6a"></div>
<div class="b" style="left:300.98px;top:372.00px;width:0.70px;height:1.40px;background:#6a6a6a"></div>
<div class="b" style="left:305.37px;top:372.00px;width:0.70px;height:1.40px;background:#6a6a6a"></div>
<div class="b" style="left:307.56px;top:372.00px;width:0.70px;height:1.40px;background:#6a6a6a"></div>
<div class="b" style="left:309.76px;top:372.00px;width:0.70px;height:1.40px;background:#6a6a6a"></div>
<div class="b" style="left:311.95px;top:372.00px;width:0.70px;height:1.40px;background:#6a6a6a"></div>
<div class="b" style="left:316.34px;top:372.00px;width:0.70px;height:1.40px;background:#6a6a6a"></div>
<div class="b" style="left:318.54px;top:372.00px;width:0.70px;height:1.40px;background:#6a6a6a"></div>
<div class="b" style="left:320.73px;top:372.00px;width:0.70px;height:1.40px;background:#6a6a6a"></div>
<div class="b" style="left:322.93px;top:372.00px;width:0.70px;height:1.40px;background:#6a6a6a"></div>
<div class="b" style="left:327.32px;top:372.00px;width:0.70px;height:1.40px;background:#6a6a6a"></div>
<div class="b" style="left:329.51px;top:372.00px;width:0.70px;height:1.40px;background:#6a6a6a"></div>
<div class="b" style="left:331.71px;top:372.00px;width:0.70px;height:1.40px;background:#6a6a6a"></div>
<div class="b" style="left:333.91px;top:372.00px;width:0.70px;height:1.40px;background:#6a6a6a"></div>
<div class="b" style="left:338.30px;top:372.00px;width:0.70px;height:1.40px;background:#6a6a6a"></div>
<div class="b" style="left:340.49px;top:372.00px;width:0.70px;height:1.40px;background:#6a6a6a"></div>
<div class="b" style="left:342.69px;top:372.00px;width:0.70px;height:1.40px;background:#6a6a6a"></div>
<div class="b" style="left:344.88px;top:372.00px;width:0.70px;height:1.40px;background:#6a6a6a"></div>
<div class="b" style="left:349.27px;top:372.00px;width:0.70px;height:1.40px;background:#6a6a6a"></div>
<div class="b" style="left:351.46px;top:372.00px;width:0.70px;height:1.40px;background:#6a6a6a"></div>
<div class="b" style="left:353.66px;top:372.00px;width:0.70px;height:1.40px;background:#6a6a6a"></div>
<div class="b" style="left:355.86px;top:372.00px;width:0.70px;height:1.40px;background:#6a6a6a"></div>
<div class="b" style="left:360.25px;top:372.00px;width:0.70px;height:1.40px;background:#6a6a6a"></div>
<div class="b" style="left:362.44px;top:372.00px;width:0.70px;height:1.40px;background:#6a6a6a"></div>
<div class="b" style="left:364.63px;top:372.00px;width:0.70px;height:1.40px;background:#6a6a6a"></div>
<div class="b" style="left:366.83px;top:372.00px;width:0.70px;height:1.40px;background:#6a6a6a"></div>
<div class="b" style="left:371.22px;top:372.00px;width:0.70px;height:1.40px;background:#6a6a6a"></div>
<div class="b" style="left:373.42px;top:372.00px;width:0.70px;height:1.40px;background:#6a6a6a"></div>
<div class="b" style="left:375.61px;top:372.00px;width:0.70px;height:1.40px;background:#6a6a6a"></div>
<div class="b" style="left:377.81px;top:372.00px;width:0.70px;height:1.40px;background:#6a6a6a"></div>
<div class="b" style="left:248.20px;top:372.00px;width:0.80px;height:2.60px;background:#b0b0b0"></div>
<div class="t" style="left:148.60px;width:200px;text-align:center;top:374.64px;font-size:4.8px;color:#c8c8c8;">-60</div>
<div class="b" style="left:259.18px;top:372.00px;width:0.80px;height:2.60px;background:#b0b0b0"></div>
<div class="t" style="left:159.57px;width:200px;text-align:center;top:374.64px;font-size:4.8px;color:#c8c8c8;">-55</div>
<div class="b" style="left:270.15px;top:372.00px;width:0.80px;height:2.60px;background:#b0b0b0"></div>
<div class="t" style="left:170.55px;width:200px;text-align:center;top:374.64px;font-size:4.8px;color:#c8c8c8;">-50</div>
<div class="b" style="left:281.12px;top:372.00px;width:0.80px;height:2.60px;background:#b0b0b0"></div>
<div class="t" style="left:181.52px;width:200px;text-align:center;top:374.64px;font-size:4.8px;color:#c8c8c8;">-45</div>
<div class="b" style="left:292.10px;top:372.00px;width:0.80px;height:2.60px;background:#b0b0b0"></div>
<div class="t" style="left:192.50px;width:200px;text-align:center;top:374.64px;font-size:4.8px;color:#c8c8c8;">-40</div>
<div class="b" style="left:303.08px;top:372.00px;width:0.80px;height:2.60px;background:#b0b0b0"></div>
<div class="t" style="left:203.48px;width:200px;text-align:center;top:374.64px;font-size:4.8px;color:#c8c8c8;">-35</div>
<div class="b" style="left:314.05px;top:372.00px;width:0.80px;height:2.60px;background:#b0b0b0"></div>
<div class="t" style="left:214.45px;width:200px;text-align:center;top:374.64px;font-size:4.8px;color:#c8c8c8;">-30</div>
<div class="b" style="left:325.03px;top:372.00px;width:0.80px;height:2.60px;background:#b0b0b0"></div>
<div class="t" style="left:225.43px;width:200px;text-align:center;top:374.64px;font-size:4.8px;color:#c8c8c8;">-25</div>
<div class="b" style="left:336.00px;top:372.00px;width:0.80px;height:2.60px;background:#b0b0b0"></div>
<div class="t" style="left:236.40px;width:200px;text-align:center;top:374.64px;font-size:4.8px;color:#c8c8c8;">-20</div>
<div class="b" style="left:346.98px;top:372.00px;width:0.80px;height:2.60px;background:#b0b0b0"></div>
<div class="t" style="left:247.38px;width:200px;text-align:center;top:374.64px;font-size:4.8px;color:#c8c8c8;">-15</div>
<div class="b" style="left:357.95px;top:372.00px;width:0.80px;height:2.60px;background:#b0b0b0"></div>
<div class="t" style="left:258.35px;width:200px;text-align:center;top:374.64px;font-size:4.8px;color:#c8c8c8;">-10</div>
<div class="b" style="left:368.93px;top:372.00px;width:0.80px;height:2.60px;background:#b0b0b0"></div>
<div class="t" style="left:269.33px;width:200px;text-align:center;top:374.64px;font-size:4.8px;color:#c8c8c8;">-5</div>
<div class="b" style="left:379.90px;top:372.00px;width:0.80px;height:2.60px;background:#b0b0b0"></div>
<div class="t" style="left:280.30px;width:200px;text-align:center;top:374.64px;font-size:4.8px;color:#c8c8c8;">0</div>
<div class="b" style="left:245.00px;top:386.50px;width:100.50px;height:1.60px;background:#222122"></div>
<div class="b" style="left:245.00px;top:385.80px;width:79.00px;height:3.00px;background:#3f8ad0;border-radius:1.5px"></div>
<div class="b" style="left:323.50px;top:384.50px;width:13.00px;height:5.60px;background:linear-gradient(#e2e2e2,#c4c4c4);border-radius:1.5px"></div>
<svg class="b" style="left:350px;top:382.40px" width="11.5" height="9.8" viewBox="0 0 23 19.6">
<path d="M0.5 5.2 H4.5 L10.5 0.8 V18.8 L4.5 14.4 H0.5 Z" fill="#f4f4f4"/>
<path d="M13.2 5.2 Q15.8 9.8 13.2 14.4" stroke="#f4f4f4" stroke-width="2.3" fill="none"/>
<path d="M17 2 Q21.6 9.8 17 17.6" stroke="#f4f4f4" stroke-width="2.3" fill="none"/></svg>
<svg class="b" style="left:367.40px;top:381.40px" width="11.80" height="11.80" viewBox="-12 -12 24 24">
<g fill="#f4f4f4"><path d="M-3.6 -7.2 L-0.9 -11.9 L0.9 -11.9 L3.6 -7.2 Z" transform="rotate(0)"/><path d="M-3.6 -7.2 L-0.9 -11.9 L0.9 -11.9 L3.6 -7.2 Z" transform="rotate(45)"/><path d="M-3.6 -7.2 L-0.9 -11.9 L0.9 -11.9 L3.6 -7.2 Z" transform="rotate(90)"/><path d="M-3.6 -7.2 L-0.9 -11.9 L0.9 -11.9 L3.6 -7.2 Z" transform="rotate(135)"/><path d="M-3.6 -7.2 L-0.9 -11.9 L0.9 -11.9 L3.6 -7.2 Z" transform="rotate(180)"/><path d="M-3.6 -7.2 L-0.9 -11.9 L0.9 -11.9 L3.6 -7.2 Z" transform="rotate(225)"/><path d="M-3.6 -7.2 L-0.9 -11.9 L0.9 -11.9 L3.6 -7.2 Z" transform="rotate(270)"/><path d="M-3.6 -7.2 L-0.9 -11.9 L0.9 -11.9 L3.6 -7.2 Z" transform="rotate(315)"/><circle r="8.3"/></g><circle r="2.6" fill="#3a393a"/></svg>
<div class="b" style="left:245.20px;top:369.80px;width:2.00px;height:2.20px;background:#6ae06a"></div>
<div class="b" style="left:398.00px;top:312.00px;width:104.00px;height:129.80px;border:0.8px solid #323132;box-sizing:border-box"></div>
<div class="b" style="left:502.50px;top:312.00px;width:93.50px;height:129.80px;border:0.8px solid #323132;box-sizing:border-box"></div>
<div class="b" style="left:403.00px;top:315.80px;width:93.50px;height:14.00px;background:#454445;border-radius:2px"></div>
<div class="b" style="left:484.30px;top:316.40px;width:0.60px;height:12.80px;background:#3a393a"></div>
<svg class="b" style="left:487.90px;top:318.90px" width="5" height="9" viewBox="0 0 10 18">
<path d="M1.5 6 L5 2.5 L8.5 6 M1.5 12 L5 15.5 L8.5 12" stroke="#a0a0a0" stroke-width="1.4" fill="none"/></svg>
<div class="t" style="left:410.00px;top:320.62px;font-size:7.3px;color:#e1e0e1;transform:scaleY(1.15);transform-origin:0 6.18px;">Fade</div>
<div class="b" style="left:448.50px;top:340.00px;width:11.00px;height:1px;background:#dcdcdc"></div>
<div class="b" style="left:453.50px;top:335.00px;width:1px;height:11.00px;background:#dcdcdc"></div>
<div class="b" style="left:465.50px;top:340.00px;width:11.00px;height:1px;background:#dcdcdc"></div>
<svg class="b" style="left:483.60px;top:334.30px" width="11.80" height="11.80" viewBox="-12 -12 24 24">
<g fill="#f4f4f4"><path d="M-3.6 -7.2 L-0.9 -11.9 L0.9 -11.9 L3.6 -7.2 Z" transform="rotate(0)"/><path d="M-3.6 -7.2 L-0.9 -11.9 L0.9 -11.9 L3.6 -7.2 Z" transform="rotate(45)"/><path d="M-3.6 -7.2 L-0.9 -11.9 L0.9 -11.9 L3.6 -7.2 Z" transform="rotate(90)"/><path d="M-3.6 -7.2 L-0.9 -11.9 L0.9 -11.9 L3.6 -7.2 Z" transform="rotate(135)"/><path d="M-3.6 -7.2 L-0.9 -11.9 L0.9 -11.9 L3.6 -7.2 Z" transform="rotate(180)"/><path d="M-3.6 -7.2 L-0.9 -11.9 L0.9 -11.9 L3.6 -7.2 Z" transform="rotate(225)"/><path d="M-3.6 -7.2 L-0.9 -11.9 L0.9 -11.9 L3.6 -7.2 Z" transform="rotate(270)"/><path d="M-3.6 -7.2 L-0.9 -11.9 L0.9 -11.9 L3.6 -7.2 Z" transform="rotate(315)"/><circle r="8.3"/></g><circle r="2.6" fill="#3a393a"/></svg>
<div class="t" style="left:403.00px;top:353.74px;font-size:7.4px;color:#e1e0e1;transform:scaleY(1.15);transform-origin:0 6.26px;">Duration</div>
<div class="b" style="left:434.40px;top:350.60px;width:62.60px;height:10.80px;background:#1f1e1f"></div>
<div class="b" style="left:485.50px;top:350.40px;width:11.50px;height:10.40px;background:#4a494a;border-radius:2px"></div>
<svg class="b" style="left:488.70px;top:351.30px" width="5" height="9" viewBox="0 0 10 18">
<path d="M1.5 6 L5 2.5 L8.5 6 M1.5 12 L5 15.5 L8.5 12" stroke="#a0a0a0" stroke-width="1.4" fill="none"/></svg>
<div class="t" style="left:436.40px;top:353.74px;font-size:7.4px;color:#e1e0e1;transform:scaleY(1.15);transform-origin:0 6.26px;">300ms</div>
<div class="b" style="left:506.40px;top:315.60px;width:89.10px;height:14.50px;background:#4d4c4d;border-radius:2px 0 0 2px"></div>
<div class="t" style="left:450.20px;width:200px;text-align:center;top:319.97px;font-size:7.6px;color:#e1e0e1;transform:scaleY(1.15);transform-origin:0 6.43px;">Start Streaming</div>
<div class="b" style="left:506.40px;top:331.50px;width:89.10px;height:14.50px;background:#4d4c4d;border-radius:2px 0 0 2px"></div>
<div class="t" style="left:450.20px;width:200px;text-align:center;top:335.87px;font-size:7.6px;color:#e1e0e1;transform:scaleY(1.15);transform-origin:0 6.43px;">Start Recording</div>
<div class="b" style="left:506.40px;top:347.40px;width:89.10px;height:14.50px;background:#4d4c4d;border-radius:2px 0 0 2px"></div>
<div class="t" style="left:450.20px;width:200px;text-align:center;top:351.77px;font-size:7.6px;color:#e1e0e1;transform:scaleY(1.15);transform-origin:0 6.43px;">Studio Mode</div>
<div class="b" style="left:506.40px;top:363.30px;width:89.10px;height:14.50px;background:#4d4c4d;border-radius:2px 0 0 2px"></div>
<div class="t" style="left:450.20px;width:200px;text-align:center;top:367.67px;font-size:7.6px;color:#e1e0e1;transform:scaleY(1.15);transform-origin:0 6.43px;">Settings</div>
<div class="b" style="left:506.40px;top:379.20px;width:89.10px;height:14.50px;background:#4d4c4d;border-radius:2px 0 0 2px"></div>
<div class="t" style="left:450.20px;width:200px;text-align:center;top:383.57px;font-size:7.6px;color:#e1e0e1;transform:scaleY(1.15);transform-origin:0 6.43px;">Exit</div>
<div class="t" style="left:342.50px;top:451.07px;font-size:7.6px;color:#e1e0e1;transform:scaleY(1.15);transform-origin:0 6.43px;">LIVE: 00:00:00</div>
<div class="t" style="left:410.50px;top:451.07px;font-size:7.6px;color:#e1e0e1;transform:scaleY(1.15);transform-origin:0 6.43px;">REC: 00:00:00</div>
<div class="t" style="left:478.30px;top:451.07px;font-size:7.6px;color:#e1e0e1;transform:scaleY(1.15);transform-origin:0 6.43px;">CPU: 1.6%, 60.00 fps</div>
<div class="b" style="left:0.00px;top:21.00px;width:1.30px;height:442.00px;background:#6287ad"></div>
<div class="b" style="left:1.30px;top:21.00px;width:1.50px;height:442.00px;background:#34465a"></div>
<div class="b" style="left:594.60px;top:21.00px;width:4.40px;height:442.00px;background:linear-gradient(to right,#3a3b3d,#30445a 60%,#2b4a6c)"></div>
<div class="b" style="left:599.00px;top:21.00px;width:1.00px;height:442.00px;background:#4f7fb0"></div>
<div class="b" style="left:0.00px;top:461.50px;width:600.00px;height:1.50px;background:#5a87b0"></div>
</div></body></html>
